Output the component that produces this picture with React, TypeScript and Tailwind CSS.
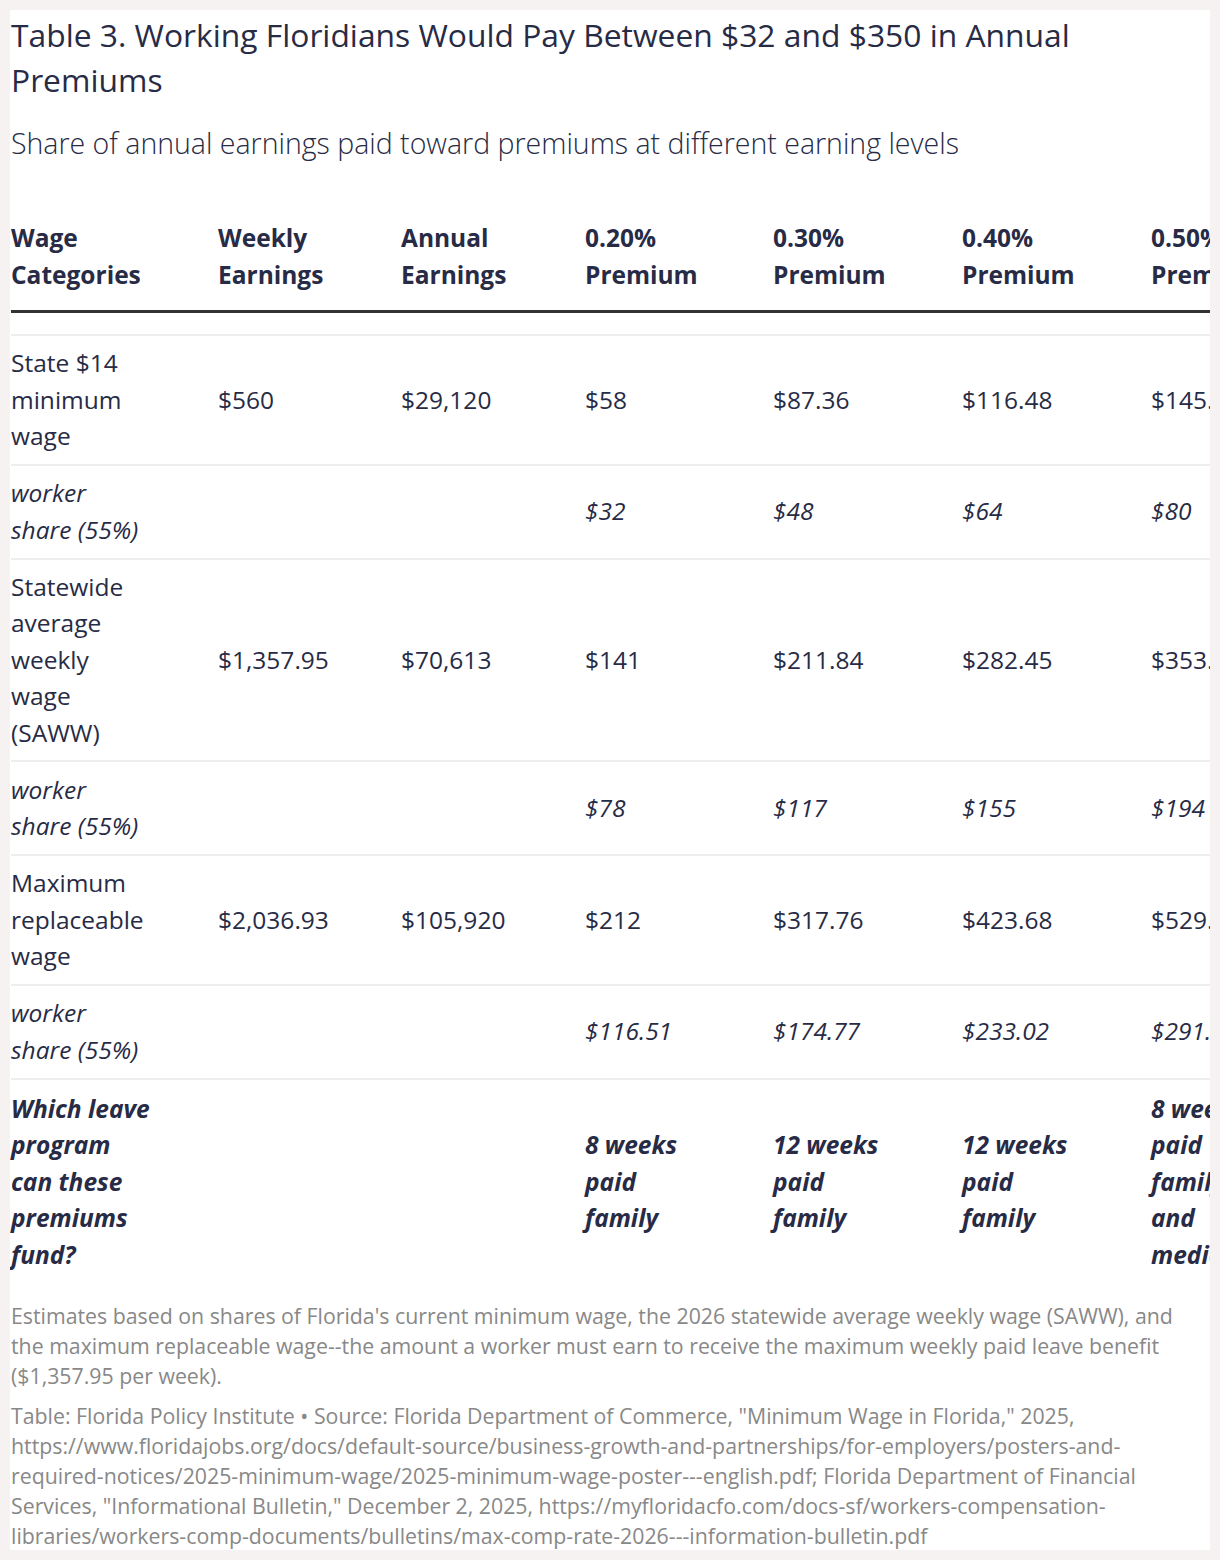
import React from 'react';

type Row = {
  label: React.ReactNode;
  cells: string[];
  kind: 'main' | 'share';
};

const ROWS: Row[] = [
  {
    kind: 'main',
    label: (<>State $14<br />minimum<br />wage</>),
    cells: ['$560', '$29,120', '$58', '$87.36', '$116.48', '$145.60'],
  },
  {
    kind: 'share',
    label: (<>worker<br />share (55%)</>),
    cells: ['', '', '$32', '$48', '$64', '$80'],
  },
  {
    kind: 'main',
    label: (<>Statewide<br />average<br />weekly<br />wage<br />(SAWW)</>),
    cells: ['$1,357.95', '$70,613', '$141', '$211.84', '$282.45', '$353.07'],
  },
  {
    kind: 'share',
    label: (<>worker<br />share (55%)</>),
    cells: ['', '', '$78', '$117', '$155', '$194'],
  },
  {
    kind: 'main',
    label: (<>Maximum<br />replaceable<br />wage</>),
    cells: ['$2,036.93', '$105,920', '$212', '$317.76', '$423.68', '$529.60'],
  },
  {
    kind: 'share',
    label: (<>worker<br />share (55%)</>),
    cells: ['', '', '$116.51', '$174.77', '$233.02', '$291.28'],
  },
];

const FUND = [
  '',
  '',
  '8 weeks\npaid\nfamily',
  '12 weeks\npaid\nfamily',
  '12 weeks\npaid\nfamily',
  '8 weeks\npaid\nfamily\nand\nmedical',
];

// column widths measured off the reference; last one runs past the card edge
const GRID = 'grid grid-cols-[207px_183px_184px_188px_189px_189px_189px] w-max';

function Lines({ text }: { text: string }) {
  const parts = text.split('\n');
  return (
    <>
      {parts.map((p, i) => (
        <React.Fragment key={i}>
          {p}
          {i < parts.length - 1 && <br />}
        </React.Fragment>
      ))}
    </>
  );
}

export default function App() {
  return (
    <div className="min-h-[1560px] bg-[#f5f2f1] p-[10px] font-['Open_Sans',sans-serif] text-[#282b45]">
      <div className="bg-white h-[1540px] overflow-hidden pl-px">
        <h1 className="pt-[2px] text-[31.8px] leading-[45px] font-normal whitespace-nowrap">
          Table 3. Working Floridians Would Pay Between $32 and $350 in Annual
          <br />
          Premiums
        </h1>
        <p className="mt-[19px] text-[28.5px] leading-[45px] font-light whitespace-nowrap">
          Share of annual earnings paid toward premiums at different earning levels
        </p>

        <div className="mt-[53px]">
          <div className={`${GRID} items-end pb-[17px] border-b-[3px] border-[#333333] text-[24.5px] leading-[37px] font-bold`}>
            <div>Wage<br />Categories</div>
            <div>Weekly<br />Earnings</div>
            <div>Annual<br />Earnings</div>
            <div>0.20%<br />Premium</div>
            <div>0.30%<br />Premium</div>
            <div>0.40%<br />Premium</div>
            <div>0.50%<br />Premium</div>
          </div>

          <div className="h-[23px] border-b-2 border-[#eeeeee]" />

          {ROWS.map((row, i) => (
            <div
              key={i}
              className={`${GRID} items-center border-b-2 border-[#eeeeee] text-[24.5px] leading-[36.5px] ${
                row.kind === 'share' ? 'italic py-[9.5px]' : 'py-[9px]'
              }`}
            >
              <div className="whitespace-nowrap">{row.label}</div>
              {row.cells.map((c, j) => (
                <div key={j} className="whitespace-nowrap">{c}</div>
              ))}
            </div>
          ))}

          <div className={`${GRID} items-center pt-[11px] pb-[9px] text-[24.5px] leading-[36.5px] italic font-bold`}>
            <div className="whitespace-nowrap">Which leave<br />program<br />can these<br />premiums<br />fund?</div>
            {FUND.map((c, j) => (
              <div key={j} className="whitespace-nowrap">
                <Lines text={c} />
              </div>
            ))}
          </div>
        </div>

        <div className="mt-[19px] text-[21.3px] leading-[30px] text-[#888888] whitespace-nowrap">
          <p>
            Estimates based on shares of Florida's current minimum wage, the 2026 statewide average weekly wage (SAWW), and
            <br />
            the maximum replaceable wage--the amount a worker must earn to receive the maximum weekly paid leave benefit
            <br />
            ($1,357.95 per week).
          </p>
          <p className="mt-[10px]">
            Table: Florida Policy Institute • Source: Florida Department of Commerce, "Minimum Wage in Florida," 2025,
            <br />
            https://www.floridajobs.org/docs/default-source/business-growth-and-partnerships/for-employers/posters-and-
            <br />
            required-notices/2025-minimum-wage/2025-minimum-wage-poster---english.pdf; Florida Department of Financial
            <br />
            Services, "Informational Bulletin," December 2, 2025, https://myfloridacfo.com/docs-sf/workers-compensation-
            <br />
            libraries/workers-comp-documents/bulletins/max-comp-rate-2026---information-bulletin.pdf
          </p>
        </div>
      </div>
    </div>
  );
}
